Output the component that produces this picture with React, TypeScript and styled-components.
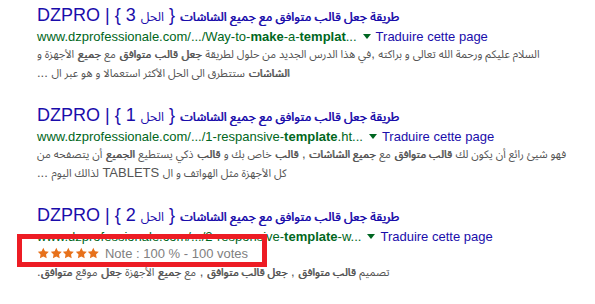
import { Fragment } from "react";
import styled, { createGlobalStyle } from "styled-components";

type Result = {
  title: string;
  url: string;
  lines: string[];
  rating?: string;
  boxed?: boolean;
};

const results: Result[] = [
  {
    title: "**طريقة جعل قالب متوافق مع جميع الشاشات** { الحل 3 } | DZPRO",
    url: "www.dzprofessionale.com/.../Way-to-**make**-a-**templat**...",
    lines: [
      "السلام عليكم ورحمة الله تعالى و براكته ,في هذا الدرس الجديد من حلول لطريقة **جعل** **قالب** **متوافق** مع **جميع** الأجهزة و",
      "**الشاشات** ستتطرق الى الحل الأكثر استعمالا و هو عبر ال ...",
    ],
  },
  {
    title: "**طريقة جعل قالب متوافق مع جميع الشاشات** { الحل 1 } | DZPRO",
    url: "www.dzprofessionale.com/.../1-respansive-**template**.ht...",
    lines: [
      "فهو شيئ رائع أن يكون لك **قالب متوافق** مع **جميع الشاشات** , **قالب** خاص بك و **قالب** ذكي يستطيع **الجميع** أن يتصفحه من",
      "كل الأجهزة مثل الهواتف و ال TABLETS لذالك اليوم ...",
    ],
  },
  {
    title: "**طريقة جعل قالب متوافق مع جميع الشاشات** { الحل 2 } | DZPRO",
    url: "www.dzprofessionale.com/.../2-responsive-**template**-w...",
    rating: "Note : 100 % - 100 votes",
    boxed: true,
    lines: [
      "تصميم **قالب متوافق** , **جعل قالب متوافق** , مع **جميع** الأجهزة **جعل** موقع **متوافق**.",
    ],
  },
  {
    title: "DZPRO : **حلول الشاشات**",
    url: "www.dzprofessionale.com/...",
    lines: [],
  },
];

const ARABIC_RUN = /([\u0600-\u06FF]+(?:\s+[\u0600-\u06FF]+)*)/;

// "**word**" -> bold, Arabic runs get their own span (own font + size)
function marked(text: string) {
  return text.split(/\*\*(.+?)\*\*/).flatMap((part, i) => {
    const bold = i % 2 === 1;
    return part.split(ARABIC_RUN).map((piece, k) => {
      const key = `${i}-${k}`;
      if (!piece) return null;
      if (k % 2 === 1) {
        return (
          <Arabic key={key} $bold={bold}>
            {piece}
          </Arabic>
        );
      }
      return bold ? <b key={key}>{piece}</b> : <Fragment key={key}>{piece}</Fragment>;
    });
  });
}

function Stars() {
  return (
    <StarRow>
      {[0, 1, 2, 3, 4].map((i) => (
        <svg key={i} viewBox="0 0 24 24" width="12.6" height="13">
          <path d="M12 1.2l3.2 6.6 7.2 1-5.2 5.1 1.3 7.2L12 17.7l-6.5 3.4 1.3-7.2L1.6 8.8l7.2-1z" />
        </svg>
      ))}
    </StarRow>
  );
}

function App() {
  return (
    <Page>
      <GlobalStyle />
      {results.map((r, i) => (
        <Item key={i}>
          <Title>
            <span dir="rtl">{marked(r.title)}</span>
          </Title>
          <UrlRow>
            <Cite>{marked(r.url)}</Cite>
            <Arrow />
            <Translate>Traduire cette page</Translate>
          </UrlRow>
          {r.rating && (
            <RatingRow>
              <Stars />
              <span>{r.rating}</span>
              {r.boxed && <Highlight />}
            </RatingRow>
          )}
          {r.lines.map((line, j) => (
            <SnippetLine key={j}>
              <span dir="rtl">{marked(line)}</span>
            </SnippetLine>
          ))}
        </Item>
      ))}
    </Page>
  );
}

export default App;

const GlobalStyle = createGlobalStyle`
  html, body {
    margin: 0;
    background: #fff;
  }
  body {
    font-family: Arial, "Liberation Sans", sans-serif;
  }
`;

const Arabic = styled.span<{ $bold?: boolean }>`
  font-family: "Noto Sans Arabic", "Noto Naskh Arabic", "DejaVu Sans", sans-serif;
  font-weight: normal;
  text-shadow: ${(p) => (p.$bold ? "0.6px 0 0 currentColor" : "none")};
`;

const Page = styled.div`
  height: 304px;
  overflow: hidden;
  padding: 5px 0 0 37px;
  box-sizing: border-box;
`;

const Item = styled.div`
  margin-bottom: 22px;
`;

const Title = styled.h3`
  margin: 0;
  font-size: 18px;
  font-weight: normal;
  line-height: 21.6px;
  color: #1a0dab;
  white-space: nowrap;
  ${Arabic} {
    font-size: 12.5px;
  }
`;

const UrlRow = styled.div`
  font-size: 13px;
  line-height: 16px;
  white-space: nowrap;
`;

const Cite = styled.cite`
  font-style: normal;
  color: #006621;
  b {
    font-weight: bold;
  }
`;

const Arrow = styled.span`
  display: inline-block;
  vertical-align: middle;
  margin: -2px 5px 0 6px;
  border-top: 5px solid #006621;
  border-left: 4px solid transparent;
  border-right: 4px solid transparent;
`;

const Translate = styled.a`
  color: #1a0dab;
  text-decoration: none;
`;

const SnippetLine = styled.div`
  font-size: 13px;
  line-height: 18.2px;
  color: #545454;
  white-space: nowrap;
  ${Arabic} {
    font-size: 11px;
  }
`;

const RatingRow = styled.div`
  position: relative;
  display: flex;
  align-items: center;
  height: 18px;
  font-size: 13px;
  color: #808080;
`;

const StarRow = styled.span`
  display: inline-flex;
  margin-right: 5px;
  svg {
    fill: #e7711b;
  }
`;

const Highlight = styled.div`
  position: absolute;
  top: -11px;
  left: -20px;
  width: 250px;
  height: 33px;
  border: 5px solid #ed1c24;
  box-sizing: border-box;
  pointer-events: none;
`;
